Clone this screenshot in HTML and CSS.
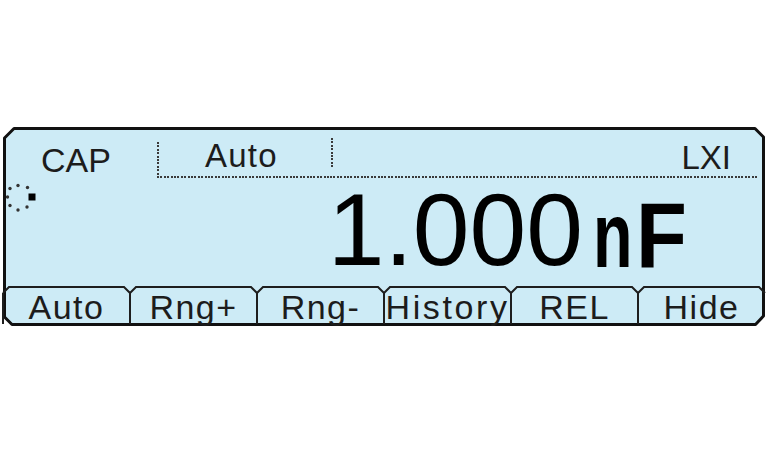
FILE: index.html
```html
<!DOCTYPE html>
<html lang="en">
<head>
<meta charset="utf-8">
<title>CAP 1.000nF</title>
<link rel="stylesheet" href="styles.css">
</head>
<body>
<div class="screen">
  <svg class="frame" width="762" height="199" viewBox="0 0 762 199" aria-hidden="true">
    <path d="M11,1.5 H752 L760.5,10 V189 L752.5,197.5 H9 L1.5,190 V11 Z" fill="#cdebf6" stroke="#111" stroke-width="3" stroke-linejoin="round"/>
  </svg>
  <div class="panel">
    <div class="header">
      <div class="func">CAP</div>
      <div class="range">Auto</div>
      <div class="status">LXI</div>
    </div>
    <div class="main">
      <svg class="busy" width="32" height="32" viewBox="0 0 32 32" aria-hidden="true">
        <g fill="#333">
          <circle cx="13" cy="2.5" r="1.7"/>
          <circle cx="22.5" cy="4.5" r="1.7"/>
          <circle cx="5" cy="5.5" r="1.7"/>
          <circle cx="2.5" cy="14" r="1.7"/>
          <circle cx="5" cy="22.5" r="1.7"/>
          <circle cx="13" cy="27" r="1.7"/>
          <circle cx="22" cy="24" r="1.7"/>
        </g>
        <rect x="23.5" y="10.5" width="7" height="7" fill="#000"/>
      </svg>
      <div class="reading"><span class="digits">1.000</span><span class="unit unit-n">n</span><span class="unit unit-f">F</span></div>
    </div>
    <div class="softkeys">
      <div class="key"><svg class="key-outline" viewBox="0 0 127 38" aria-hidden="true"><path d="M0,7 L6,1 H121 L127,7 M0,7 V38"/></svg><span class="label">Auto</span></div>
      <div class="key"><svg class="key-outline" viewBox="0 0 127 38" aria-hidden="true"><path d="M0,7 L6,1 H121 L127,7 M0,7 V38"/></svg><span class="label">Rng+</span></div>
      <div class="key"><svg class="key-outline" viewBox="0 0 127 38" aria-hidden="true"><path d="M0,7 L6,1 H121 L127,7 M0,7 V38"/></svg><span class="label">Rng-</span></div>
      <div class="key"><svg class="key-outline" viewBox="0 0 127 38" aria-hidden="true"><path d="M0,7 L6,1 H121 L127,7 M0,7 V38"/></svg><span class="label label-wide">History</span></div>
      <div class="key"><svg class="key-outline" viewBox="0 0 127 38" aria-hidden="true"><path d="M0,7 L6,1 H121 L127,7 M0,7 V38"/></svg><span class="label">REL</span></div>
      <div class="key"><svg class="key-outline" viewBox="0 0 127 38" aria-hidden="true"><path d="M0,7 L6,1 H121 L127,7 M0,7 V38"/></svg><span class="label">Hide</span></div>
    </div>
  </div>
</div>
</body>
</html>
```

FILE: styles.css
```css
html, body {
  margin: 0;
  padding: 0;
  background: #ffffff;
}

body {
  width: 768px;
  height: 449px;
  overflow: hidden;
  font-family: "Liberation Sans", Arial, sans-serif;
  color: #1c1c1c;
}

.screen {
  position: relative;
  width: 762px;
  height: 199px;
  margin: 127px 0 0 3px;
}

.frame {
  position: absolute;
  left: 0;
  top: 0;
  display: block;
}

.panel {
  position: relative;
  display: flex;
  flex-direction: column;
  width: 762px;
  height: 199px;
}

/* ---------- header ---------- */
.header {
  display: flex;
  height: 51px;
  padding-right: 8px;
  box-sizing: border-box;
}

.func {
  width: 154px;
  box-sizing: border-box;
  padding: 16px 0 0 38px;
  font-size: 34px;
  line-height: 34px;
}

.range {
  width: 173px;
  box-sizing: border-box;
  padding: 12px 0 0 48px;
  font-size: 33px;
  line-height: 33px;
  letter-spacing: 1.2px;
  background-image:
    repeating-linear-gradient(to bottom, #3a3a3a 0 2px, transparent 2px 3.4px),
    repeating-linear-gradient(to right, #3a3a3a 0 2px, transparent 2px 3.4px);
  background-size: 2px 33px, 100% 2px;
  background-position: 0 15px, 0 49px;
  background-repeat: no-repeat;
}

.status {
  flex: 1;
  box-sizing: border-box;
  padding: 14px 26px 0 0;
  text-align: right;
  font-size: 33px;
  line-height: 33px;
  background-image:
    repeating-linear-gradient(to bottom, #3a3a3a 0 2px, transparent 2px 3.4px),
    repeating-linear-gradient(to right, #3a3a3a 0 2px, transparent 2px 3.4px);
  background-size: 2px 31px, 100% 2px;
  background-position: 1px 11px, 0 49px;
  background-repeat: no-repeat;
}

/* ---------- main reading ---------- */
.main {
  display: flex;
  align-items: flex-start;
  height: 108px;
}

.busy {
  display: block;
  margin: 5px 0 0 2px;
}

.reading {
  margin: 1px 79px 0 auto;
  white-space: nowrap;
  color: #000;
  font-size: 102px;
  line-height: 102px;
}

.unit {
  display: inline-block;
  font-weight: bold;
  font-size: 93.6px;
  line-height: 1;
  vertical-align: -2px;
  transform-origin: left center;
}

.unit-n {
  width: 43px;
  margin-left: 10px;
  transform: scaleX(0.69);
}

.unit-f {
  width: 50px;
  transform: scaleX(0.89);
}

/* ---------- softkeys ---------- */
.softkeys {
  display: grid;
  grid-template-columns: repeat(6, 1fr);
  height: 38px;
}

.key {
  position: relative;
  text-align: center;
}

.key-outline {
  position: absolute;
  left: 0;
  top: 0;
  width: 100%;
  height: 100%;
  overflow: visible;
  fill: none;
  stroke: #1e1e1e;
  stroke-width: 2;
}

.label {
  position: relative;
  display: block;
  padding-top: 5px;
  font-size: 34px;
  line-height: 33px;
  letter-spacing: 1.5px;
}

.label-wide {
  letter-spacing: 2.6px;
}
```
